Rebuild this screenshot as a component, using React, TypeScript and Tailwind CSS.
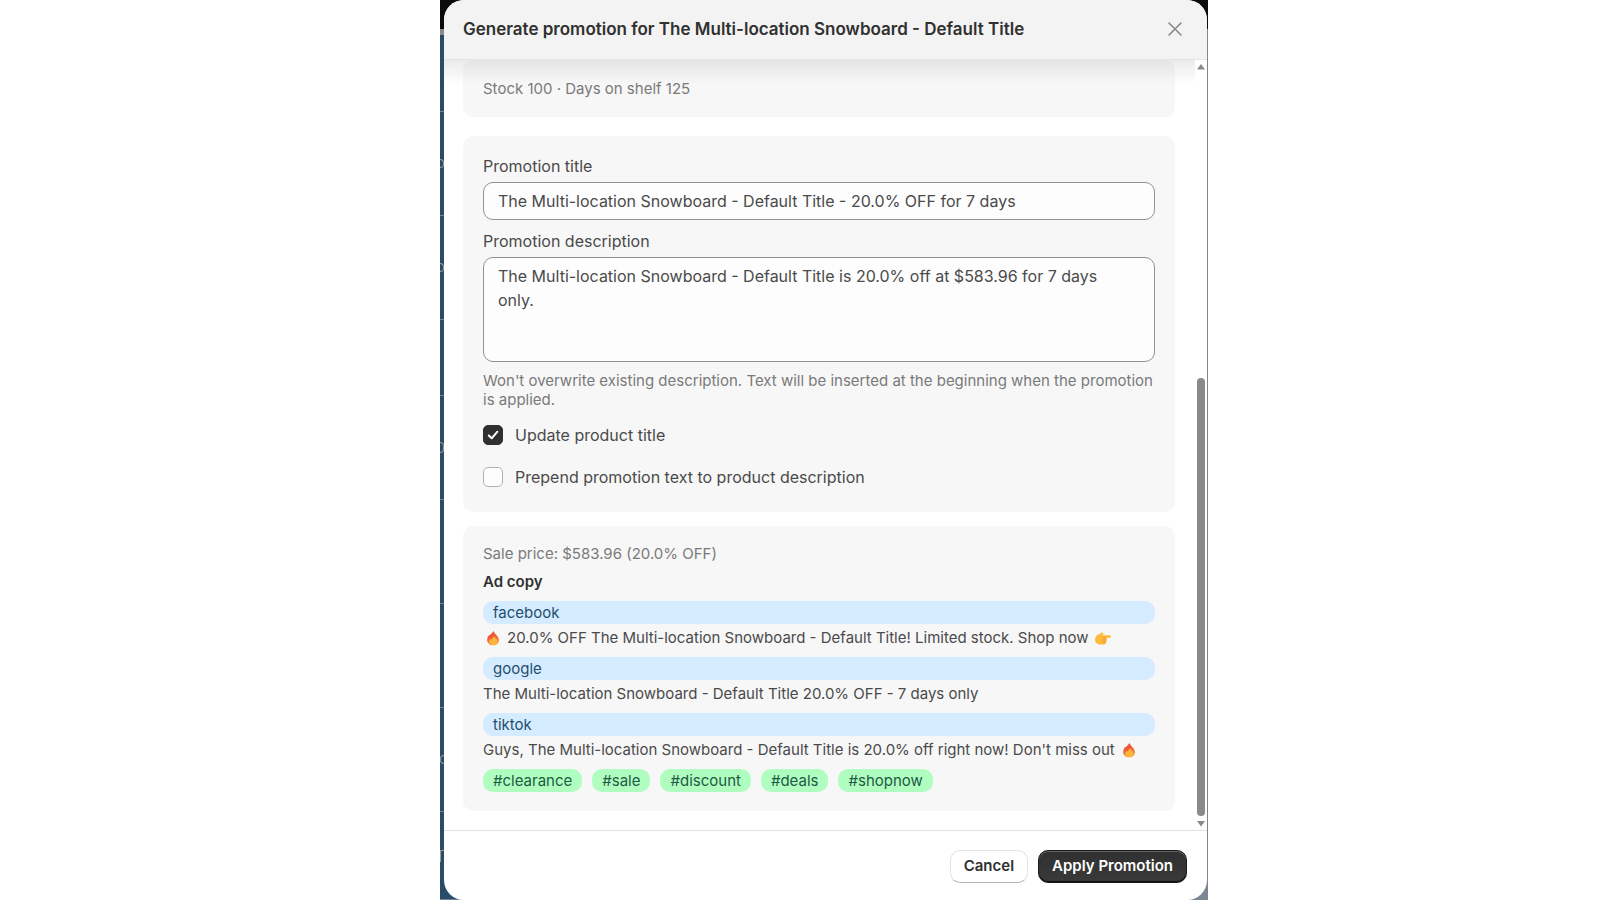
import { useState } from "react";

interface AdCopy {
  channel: string;
  text: string;
  before?: "fire";
  after?: "fire" | "point";
}

const AD_COPY: AdCopy[] = [
  {
    channel: "facebook",
    text: "20.0% OFF The Multi-location Snowboard - Default Title! Limited stock. Shop now",
    before: "fire",
    after: "point",
  },
  {
    channel: "google",
    text: "The Multi-location Snowboard - Default Title 20.0% OFF - 7 days only",
  },
  {
    channel: "tiktok",
    text: "Guys, The Multi-location Snowboard - Default Title is 20.0% off right now! Don't miss out",
    after: "fire",
  },
];

const HASHTAGS = ["#clearance", "#sale", "#discount", "#deals", "#shopnow"];

// Rows of the table that sits behind the modal
const BACKDROP_ROWS = [
  { height: "h-[77px]", mark: "" },
  { height: "h-[104px]", mark: "h-[9px] rounded-r-full border border-l-0" },
  { height: "h-[104px]", mark: "h-[9px] rounded-r-full border border-l-0" },
  { height: "h-[76px]", mark: "" },
  { height: "h-[104px]", mark: "h-[11px] rounded-r-full border border-l-0" },
  { height: "h-[104px]", mark: "" },
  { height: "h-[104px]", mark: "" },
  { height: "h-[104px]", mark: "h-[9px] rounded-l-full border border-r-0" },
  { height: "flex-1", mark: "h-[12px] border-l border-t" },
];

function Emoji({ name }: { name: "fire" | "point" }) {
  if (name === "fire") {
    return (
      <svg viewBox="0 0 20 20" className="h-5 w-5 shrink-0" role="img" aria-label="fire">
        <defs>
          <linearGradient id="flame" x1="0" y1="0" x2="0.3" y2="1">
            <stop offset="0" stopColor="#e8402c" />
            <stop offset="0.6" stopColor="#f2633a" />
            <stop offset="1" stopColor="#f9a03c" />
          </linearGradient>
        </defs>
        <path
          d="M10.600 3c.4 2 2 3 3.200 4.600C15.200 9.300 16 10.700 16 12.300 16 15.300 13.600 17.300 10.200 17.300 6.600 17.300 4.200 15.200 4.200 12c0-2.100.8-3.700 2-4.700C8 6.300 9.300 4.800 10.600 3z"
          fill="url(#flame)"
        />
        <path
          d="M11.200 8.300c.2 1.400 3.200 2.600 3.200 5.200 0 2.200-1.800 3.600-4 3.600s-4.200-1.300-4.200-3.300c0-1.400.9-2.300 1.800-3 .1.700.3 1 .8 1.200.3-1.300 1.200-2.800 2.400-3.700z"
          fill="#fcb53b"
        />
      </svg>
    );
  }
  return (
    <svg viewBox="0 0 20 20" className="h-5 w-5 shrink-0" role="img" aria-label="pointing right">
      <path
        d="M2 11.500C2 8.500 4 7 6 6.200L9 4.600c1-.5 2 .7 1.200 1.600L9.400 7.200h7.400c1.600 0 1.600 2.500 0 2.500h-3.600c1 .4 1 1.900 0 2.200.8.500.7 1.900-.2 2.200.5 1-.1 2-1.100 2.100-1.700.4-4 .5-5.900.2C3.500 16 2 14 2 11.500z"
        fill="#fdbb3a"
      />
      <path
        d="M9.400 9.700h3.800M9.400 11.900h3.800M9.200 14.100h3.800"
        stroke="#f08f2c"
        strokeWidth="0.7"
        fill="none"
      />
    </svg>
  );
}

function Checkbox({
  label,
  checked,
  onChange,
}: {
  label: string;
  checked: boolean;
  onChange: (checked: boolean) => void;
}) {
  return (
    <label className="flex h-5 items-center gap-3 text-base leading-5">
      <span className="relative h-5 w-5">
        <input
          type="checkbox"
          checked={checked}
          onChange={(e) => onChange(e.target.checked)}
          className="block h-5 w-5 appearance-none rounded-[5px] border border-[#b0b0b0] bg-[#fdfdfd] checked:border-[#303030] checked:bg-[#303030]"
        />
        {checked && (
          <svg
            viewBox="0 0 20 20"
            className="pointer-events-none absolute inset-0 h-5 w-5"
            fill="none"
            stroke="#fff"
            strokeWidth="2"
            strokeLinecap="round"
            strokeLinejoin="round"
          >
            <path d="M5.800 10.500l2.900 2.800 5.700-6.600" />
          </svg>
        )}
      </span>
      {label}
    </label>
  );
}

export default function App() {
  const [title, setTitle] = useState(
    "The Multi-location Snowboard - Default Title - 20.0% OFF for 7 days",
  );
  const [description, setDescription] = useState(
    "The Multi-location Snowboard - Default Title is 20.0% off at $583.96 for 7 days only.",
  );
  const [updateTitle, setUpdateTitle] = useState(true);
  const [prependText, setPrependText] = useState(false);

  return (
    <div className="flex h-screen justify-center overflow-hidden bg-white pl-12 font-[Inter,sans-serif] text-[#4a4a4a] [font-optical-sizing:none]">
      <div className="relative w-full max-w-[768px]">
        {/* Page behind the modal */}
        <div className="absolute inset-0 flex flex-col bg-[#7d8794]">
          <div className="h-[29px] bg-[#0b0b0b]" />
          <div className="h-[6px] bg-[#8a8a8a]" />
          <div className="flex w-6 flex-1 flex-col bg-[#2b4c69]">
            {BACKDROP_ROWS.map((row, index) => (
              <div
                key={index}
                className={`flex items-center border-b border-[#6f8496] ${row.height}`}
              >
                <div className={`w-[4px] border-[#9a9a94] ${row.mark}`} />
              </div>
            ))}
          </div>
        </div>

        <div
          role="dialog"
          aria-labelledby="modal-title"
          className="relative mr-px ml-1 flex h-full flex-col overflow-hidden rounded-[20px] bg-white"
        >
          <header className="flex h-[60px] shrink-0 items-center justify-between border-b border-[#e3e3e3] bg-[#f3f3f3] pr-[22px] pb-0.5 pl-[19px]">
            <h2 id="modal-title" className="text-[17px] leading-6 font-semibold text-[#303030]">
              Generate promotion for The Multi-location Snowboard - Default Title
            </h2>
            <button type="button" aria-label="Close" className="p-0.5">
              <svg
                viewBox="0 0 16 16"
                className="h-4 w-4"
                fill="none"
                stroke="#8a8a8a"
                strokeWidth="1.6"
                strokeLinecap="round"
              >
                <path d="M2 2l12 12M14 2L2 14" />
              </svg>
            </button>
          </header>

          <div className="flex min-h-0 flex-1">
            <div className="relative min-w-0 flex-1 overflow-hidden pr-5 pl-[19px]">
              <div className="pointer-events-none absolute inset-x-0 top-0 h-6 bg-gradient-to-b from-black/8 to-transparent" />

              <section className="rounded-[10px] bg-[#f7f7f7] px-5 pt-[19px] pb-[18px]">
                <p className="text-[15px] leading-5 text-[#7a7a7a]">
                  Stock 100 · Days on shelf 125
                </p>
              </section>

              <section className="mt-[19px] rounded-[10px] bg-[#f7f7f7] px-5 pt-5 pb-[25px]">
                <label htmlFor="promo-title" className="block text-base leading-5">
                  Promotion title
                </label>
                <input
                  id="promo-title"
                  type="text"
                  value={title}
                  onChange={(e) => setTitle(e.target.value)}
                  className="mt-[6px] block h-[38px] w-full rounded-[10px] border border-[#8f9194] bg-[#fdfdfd] px-[14px] text-base leading-6"
                />
                <label
                  htmlFor="promo-description"
                  className="mt-[11px] block text-base leading-5"
                >
                  Promotion description
                </label>
                <textarea
                  id="promo-description"
                  value={description}
                  onChange={(e) => setDescription(e.target.value)}
                  className="mt-[6px] block h-[105px] w-full resize-none rounded-[10px] border border-[#8f9194] bg-[#fdfdfd] py-[6px] pr-6 pl-[14px] text-base leading-6"
                />
                <p className="mt-[9px] text-[15px] leading-[19px] text-[#7a7a7a]">
                  Won't overwrite existing description. Text will be inserted at the
                  beginning when the promotion is applied.
                </p>
                <div className="mt-4 flex flex-col gap-[22px]">
                  <Checkbox
                    label="Update product title"
                    checked={updateTitle}
                    onChange={setUpdateTitle}
                  />
                  <Checkbox
                    label="Prepend promotion text to product description"
                    checked={prependText}
                    onChange={setPrependText}
                  />
                </div>
              </section>

              <section className="mt-[14px] rounded-[10px] bg-[#f7f7f7] px-5 pt-[18px] pb-[19px] text-[15px] leading-5">
                <p className="text-[#7a7a7a]">Sale price: $583.96 (20.0% OFF)</p>
                <h3 className="mt-2 font-semibold text-[#303030]">Ad copy</h3>
                <div className="mt-[9px] flex flex-col gap-[9px]">
                  {AD_COPY.map((ad) => (
                    <div key={ad.channel} className="flex flex-col gap-1">
                      <div className="h-[23px] rounded-[10px] bg-[#d5ebff] px-[10px] leading-[23px] text-[#1f4f6e]">
                        {ad.channel}
                      </div>
                      <p className="flex items-center gap-1 whitespace-nowrap">
                        {ad.before && <Emoji name={ad.before} />}
                        {ad.text}
                        {ad.after && <Emoji name={ad.after} />}
                      </p>
                    </div>
                  ))}
                  <div className="flex gap-[10px]">
                    {HASHTAGS.map((tag) => (
                      <span
                        key={tag}
                        className="h-[23px] rounded-[10px] bg-[#affebf] px-[10px] leading-[23px] text-[#1d5b45]"
                      >
                        {tag}
                      </span>
                    ))}
                  </div>
                </div>
              </section>
            </div>

            {/* Scrollbar */}
            <div className="flex w-3 shrink-0 flex-col items-center pt-1 pb-[3px]">
              <svg viewBox="0 0 8 6" className="h-[6px] w-2" fill="#8a8a8a">
                <path d="M4 0l4 5.500H0z" />
              </svg>
              <div className="mt-[308px] w-2 flex-1 rounded-full bg-[#8a8a8a]" />
              <svg viewBox="0 0 8 6" className="mt-[5px] h-[6px] w-2" fill="#8a8a8a">
                <path d="M0 0h8L4 5.500z" />
              </svg>
            </div>
          </div>

          <footer className="flex h-[70px] shrink-0 items-center justify-end gap-[10px] border-t border-[#e3e3e3] pt-0.5 pr-5 text-[15px] font-semibold">
            <button
              type="button"
              className="h-[33px] rounded-[10px] border border-[#e3e3e3] border-b-[#b5b5b5] bg-white px-[13px] text-[#303030]"
            >
              Cancel
            </button>
            <button
              type="button"
              className="h-[33px] rounded-[10px] border border-[#1a1a1a] bg-gradient-to-b from-[#303030] to-[#3a3a3a] px-[13px] text-white shadow-[inset_0_1px_0_#666,inset_0_-1px_0_#111]"
            >
              Apply Promotion
            </button>
          </footer>
        </div>
      </div>
    </div>
  );
}
